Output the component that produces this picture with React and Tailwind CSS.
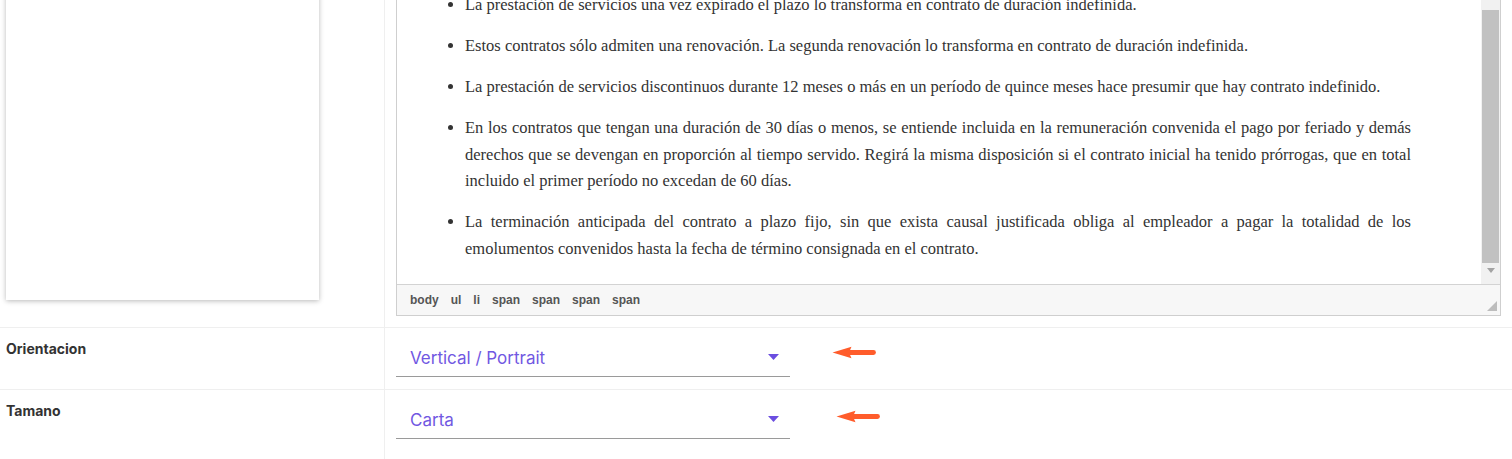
import React from "react";

function Arrow() {
  return (
    <svg width="44" height="13" viewBox="0 0 44 13" className="block">
      <path d="M0.5 6.5 L19.5 0.8 L17 6.5 L19.5 12.2 Z" fill="#ff5c2b" />
      <line x1="16" y1="6.5" x2="41.5" y2="6.5" stroke="#ff5c2b" strokeWidth="4.8" strokeLinecap="round" />
    </svg>
  );
}

function Caret() {
  return (
    <svg width="11" height="6" viewBox="0 0 11 6" className="block">
      <path d="M0 0 L11 0 L5.5 6 Z" fill="#6b4ee0" />
    </svg>
  );
}

const J = "block text-justify [text-align-last:justify]";

export default function App() {
  const serif = { fontFamily: '"Liberation Serif", "Times New Roman", serif' };
  return (
    <div className="w-[1512px] h-[459px] overflow-hidden bg-white" style={{ fontFamily: "Inter, sans-serif" }}>
      {/* Row 1 */}
      <div className="flex h-[328px] border-b border-[#efefef]">
        <div className="w-[385px] shrink-0 border-r border-[#efefef] pl-[6px]">
          <div className="-mt-[10px] h-[310px] w-[313px] bg-white shadow-[0_1px_5px_rgba(0,0,0,0.28)]" />
        </div>
        <div className="flex-1 pl-[11px] pr-[11px]">
          <div className="-mt-[9px] flex h-[325px] flex-col border border-[#cfcfcf]">
            <div className="flex min-h-0 flex-1">
              <div className="flex-1 overflow-hidden text-[16.5px] leading-[26.5px] text-[#333]" style={serif}>
                <ul className="list-disc pl-[68px] pr-[70px]">
                  <li className="mb-[14.5px]">La prestación de servicios una vez expirado el plazo lo transforma en contrato de duración indefinida.</li>
                  <li className="mb-[14.5px]">Estos contratos sólo admiten una renovación. La segunda renovación lo transforma en contrato de duración indefinida.</li>
                  <li className="mb-[14.5px]">La prestación de servicios discontinuos durante 12 meses o más en un período de quince meses hace presumir que hay contrato indefinido.</li>
                  <li className="mb-[14.5px]">
                    <span className={J}>En los contratos que tengan una duración de 30 días o menos, se entiende incluida en la remuneración convenida el pago por feriado y demás</span>
                    <span className={J}>derechos que se devengan en proporción al tiempo servido. Regirá la misma disposición si el contrato inicial ha tenido prórrogas, que en total</span>
                    <span className="block">incluido el primer período no excedan de 60 días.</span>
                  </li>
                  <li className="mb-[14.5px]">
                    <span className={J}>La terminación anticipada del contrato a plazo fijo, sin que exista causal justificada obliga al empleador a pagar la totalidad de los</span>
                    <span className="block">emolumentos convenidos hasta la fecha de término consignada en el contrato.</span>
                  </li>
                </ul>
              </div>
              <div className="flex w-[19px] shrink-0 flex-col bg-[#f1f1f1]">
                <div className="h-[18px]" />
                <div className="mx-[1px] h-[253px] bg-[#c1c1c1]" />
                <div className="flex flex-1 items-start justify-center pt-[5px]">
                  <svg width="8" height="5" viewBox="0 0 8 5" className="block">
                    <path d="M0 0 L8 0 L4 5 Z" fill="#a3a3a3" />
                  </svg>
                </div>
              </div>
            </div>
            <div
              className="relative flex h-[31px] shrink-0 items-center gap-[12px] border-t border-[#d3d3d3] bg-[#f7f7f7] pl-[13px] text-[12px] font-bold text-[#555]"
              style={{ fontFamily: '"Liberation Sans", Arial, sans-serif' }}
            >
              <span>body</span>
              <span>ul</span>
              <span>li</span>
              <span>span</span>
              <span>span</span>
              <span>span</span>
              <span>span</span>
              <svg width="10" height="10" viewBox="0 0 10 10" className="absolute right-[3px] bottom-[4px] block">
                <path d="M10 0 L10 10 L0 10 Z" fill="#bdbdbd" />
              </svg>
            </div>
          </div>
        </div>
      </div>

      {/* Row 2 */}
      <div className="flex h-[62px] border-b border-[#efefef]">
        <div className="w-[385px] shrink-0 border-r border-[#efefef] pl-[6px] pt-[11px]">
          <div className="text-[14px] font-bold leading-[20px] text-[#333]">Orientacion</div>
        </div>
        <div className="flex flex-1 items-start pl-[11px]">
          <div className="mt-[10px] flex h-[39px] w-[394px] items-center justify-between border-b border-[#9a9a9a] pl-[14px] pr-[11px]">
            <span className="pt-[4px] text-[17px] text-[#7158e2]">Vertical / Portrait</span>
            <Caret />
          </div>
          <div className="ml-[42px] mt-[18px]">
            <Arrow />
          </div>
        </div>
      </div>

      {/* Row 3 */}
      <div className="flex h-[69px]">
        <div className="w-[385px] shrink-0 border-r border-[#efefef] pl-[6px] pt-[11px]">
          <div className="text-[14px] font-bold leading-[20px] text-[#333]">Tamano</div>
        </div>
        <div className="flex flex-1 items-start pl-[11px]">
          <div className="mt-[10px] flex h-[39px] w-[394px] items-center justify-between border-b border-[#9a9a9a] pl-[14px] pr-[11px]">
            <span className="pt-[4px] text-[17px] text-[#7158e2]">Carta</span>
            <Caret />
          </div>
          <div className="ml-[46px] mt-[20px]">
            <Arrow />
          </div>
        </div>
      </div>
    </div>
  );
}
